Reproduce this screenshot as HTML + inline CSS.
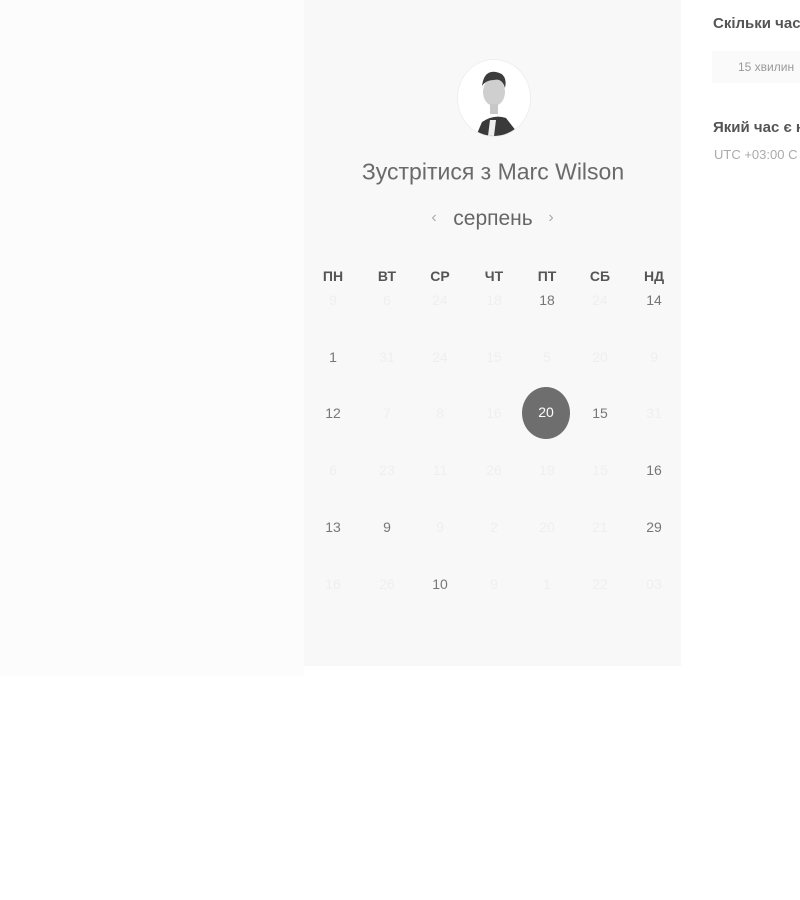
<!DOCTYPE html>
<html><head><meta charset="utf-8"><style>
body{margin:0;width:800px;height:900px;background:#fff;font-family:"Liberation Sans",sans-serif;position:relative;overflow:hidden}
.left{position:absolute;left:0;top:0;width:304px;height:676px;background:#fcfcfc}
.panel{position:absolute;left:304px;top:0;width:377px;height:666px;background:#f8f8f8}
.t{position:absolute;transform:translate(-50%,-50%);white-space:nowrap}
.h{font-size:14px;color:#555;font-weight:bold}
.d{font-size:14px;color:#777}
.f{font-size:14px;color:#efefef}
.sel{position:absolute;left:522px;top:387px;width:48px;height:52px;border-radius:50%;background:#6e6e6e}
</style></head><body>
<div class="left"></div>
<div class="panel"></div>
<div style="position:absolute;left:457px;top:59px;width:72px;height:76px;border-radius:50%;background:#fff;border:1px solid #eee;overflow:hidden">
<svg width="72" height="76" viewBox="0 0 72 76"><rect width="72" height="76" fill="#fff"/><path d="M18 76 L24 62 Q36 54 48 58 L62 76Z" fill="#3a3a3a"/><path d="M32 60 L38 60 L36 76 L30 76Z" fill="#eee"/><ellipse cx="36" cy="32" rx="11" ry="14" fill="#cfcfcf"/><path d="M24 26 Q26 10 38 12 Q50 14 47 28 Q44 18 36 20 Q28 20 24 26Z" fill="#3c3c3c"/><rect x="32" y="44" width="8" height="10" fill="#c8c8c8"/></svg></div>
<div class="t" style="left:493px;top:172px;font-size:23px;color:#6a6a6a">Зустрітися з Marc Wilson</div>
<div class="t" style="left:434px;top:218px;font-size:16px;color:#aaa">‹</div>
<div class="t" style="left:493px;top:219px;font-size:21px;color:#666">серпень</div>
<div class="t" style="left:551px;top:218px;font-size:16px;color:#aaa">›</div>
<div class="t h" style="left:333px;top:276px">ПН</div><div class="t h" style="left:387px;top:276px">ВТ</div><div class="t h" style="left:440px;top:276px">СР</div><div class="t h" style="left:494px;top:276px">ЧТ</div><div class="t h" style="left:547px;top:276px">ПТ</div><div class="t h" style="left:600px;top:276px">СБ</div><div class="t h" style="left:654px;top:276px">НД</div>
<div class="sel"></div>
<div id="g"></div>
<script>
var xs=[333,387,440,494,547,600,654],ys=[300,357,413,470,527,584];
var rows=[["9f","6f","24f","18f","18","24f","14"],["1","31f","24f","15f","5f","20f","9f"],["12","7f","8f","16f","20s","15","31f"],["6f","23f","11f","26f","19f","15f","16"],["13","9","9f","2f","20f","21f","29"],["16f","26f","10","9f","1f","22f","03f"]];
var h="";rows.forEach(function(r,i){r.forEach(function(c,j){var cl="d",n=c;if(c.slice(-1)=="f"){cl="f";n=c.slice(0,-1)}else if(c.slice(-1)=="s"){n=c.slice(0,-1);h+='<div class="t" style="left:546px;top:412px;font-size:14px;color:#fff">'+n+'</div>';return}h+='<div class="t '+cl+'" style="left:'+xs[j]+'px;top:'+ys[i]+'px">'+n+'</div>'})});
document.getElementById("g").innerHTML=h;
</script>
<div style="position:absolute;left:713px;top:15px;font-size:15px;color:#555;font-weight:bold;white-space:nowrap">Скільки часу</div>
<div style="position:absolute;left:712px;top:51px;width:100px;height:32px;background:#fafafa"></div>
<div style="position:absolute;left:738px;top:60px;font-size:12px;color:#999;white-space:nowrap">15 хвилин</div>
<div style="position:absolute;left:713px;top:119px;font-size:15px;color:#555;font-weight:bold;white-space:nowrap">Який час є н</div>
<div style="position:absolute;left:714px;top:147px;font-size:13px;color:#aaa;white-space:nowrap">UTC +03:00 C</div>
</body></html>
